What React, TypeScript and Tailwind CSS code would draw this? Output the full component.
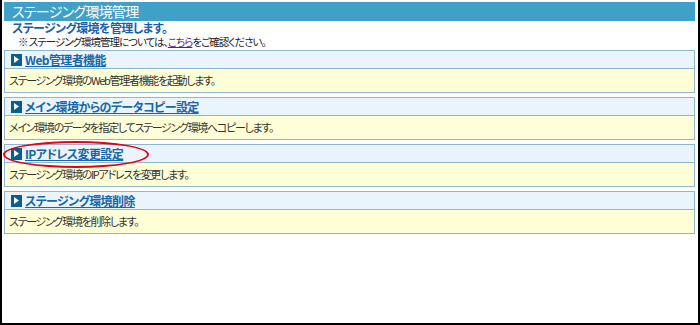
import React from "react";

const jp = "font-['MS_UI_Gothic','Noto_Sans_CJK_JP',sans-serif] [font-feature-settings:'palt']";

const items = [
    { title: "Web管理者機能", desc: "ステージング環境のWeb管理者機能を起動します。" },
    { title: "メイン環境からのデータコピー設定", desc: "メイン環境のデータを指定してステージング環境へコピーします。" },
    { title: "IPアドレス変更設定", desc: "ステージング環境のIPアドレスを変更します。", marked: true },
    { title: "ステージング環境削除", desc: "ステージング環境を削除します。" },
];

function Arrow() {
    return (
        <span className="w-[11px] h-[12px] bg-[#0b5d90] flex items-center justify-center shrink-0">
            <svg width="5" height="7" viewBox="0 0 5 7">
                <path d="M0 0 L5 3.5 L0 7 Z" fill="#ffffff" />
            </svg>
        </span>
    );
}

export default function App() {
    return (
        <div className={`w-[700px] h-[325px] bg-white border-l-2 border-r-2 border-b-2 border-black pl-[2px] pr-[1px] pt-[2px] relative ${jp}`}>
            <div className="w-[691px] h-[19px] bg-[#40a0c6] text-white text-[14px] leading-[19px] pl-[8px] tracking-[-0.7px]">
                ステージング環境管理
            </div>
            <div className="pl-[8px] text-[#1660a8] font-bold text-[12px] leading-[14px] tracking-[-0.6px]">
                ステージング環境を管理します。
            </div>
            <div className="pl-[14px] text-[#222] text-[10.5px] leading-[13px] tracking-[-1px]">
                ※ ステージング環境管理については、
                <a href="#" className="text-[#5a1aa0] underline">こちら</a>
                をご確認ください。
            </div>

            <div className="mt-[2px] flex flex-col gap-[4px] w-[691px]">
                {items.map((it) => (
                    <div key={it.title} className="border border-[#8fb6cc] relative">
                        <div className="h-[18px] bg-[#eaf4fd] border-b border-[#8fb6cc] flex items-center pl-[6px] gap-[3px]">
                            <Arrow />
                            <a href="#" className="text-[#1766a6] font-bold underline text-[12px] leading-[14px] tracking-[-0.6px]">
                                {it.title}
                            </a>
                        </div>
                        <div className="h-[23px] bg-[#ffffd7] flex items-center pl-[4px] text-[#333] text-[11px] tracking-[-1.3px]">
                            {it.desc}
                        </div>
                        {it.marked && (
                            <div className="absolute left-[-2px] top-[-4px] w-[146px] h-[27px] rounded-[50%] border-2 border-[#e4001b] pointer-events-none" />
                        )}
                    </div>
                ))}
            </div>
        </div>
    );
}
